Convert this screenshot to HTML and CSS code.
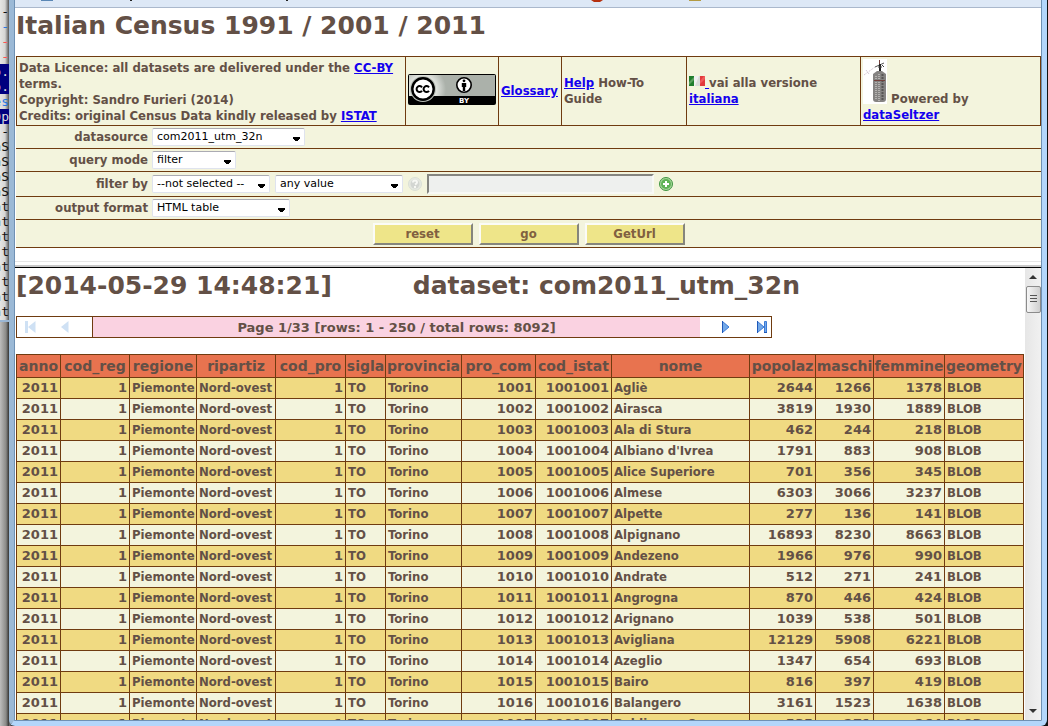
FILE: index.html
```html
<!DOCTYPE html>
<html lang="en">
<head>
<meta charset="utf-8">
<title>Italian Census 1991 / 2001 / 2011</title>
<link rel="stylesheet" href="styles.css">
</head>
<body>
<aside class="desk">
<pre class="terminal"><span>-</span><span class="t-blue">-</span><span class="t-red">-</span><span class="t-red">-</span><span class="t-sel">p.</span><span class="t-sel">p.</span><span class="t-blue">es</span><span class="t-sel">Op</span><span>--</span><span>aS</span><span>aS</span><span>aS</span><span>aS</span><span>at</span><span>at</span><span>at</span><span>.t</span><span>nt</span><span>.t</span><span>nt</span><span>nt</span></pre>
</aside>
<div class="window">
<div class="toolbar">
<svg width="700" height="7" aria-hidden="true"><path d="M26 0h12v1h-12z" fill="#5a87b5"/><path d="M115 0h2v1h-2zM271 0h2v1h-2z" fill="#222"/><path d="M576 0h12l-3 2h-6z" fill="#b5300f"/><path d="M674 0h12v1h-12z" fill="#b39a42"/></svg>
</div>
<section class="query">
<h1>Italian Census 1991 / 2001 / 2011</h1>
<table class="credits">
<colgroup><col class="k-lic"><col class="k-cc"><col class="k-glo"><col class="k-help"><col class="k-it"><col class="k-pow"></colgroup>
<tr>
<td>Data Licence: all datasets are delivered under the <a href="#">CC-BY</a> terms.<br>Copyright: Sandro Furieri (2014)<br>Credits: original Census Data kindly released by <a href="#">ISTAT</a></td>
<td class="cc-cell"><svg class="cc" width="88" height="31" viewBox="0 0 88 31" role="img" aria-label="Creative Commons BY"><defs><radialGradient id="halo" gradientUnits="userSpaceOnUse" cx="15" cy="15" r="23"><stop offset=".55" stop-color="#e4e7e2"/><stop offset="1" stop-color="#abb1aa"/></radialGradient></defs><rect width="88" height="31" rx="2" fill="#000"/><path d="M1 1h86v21H1z" fill="url(#halo)"/><circle cx="15" cy="15" r="13" fill="#b8bdb6"/><circle cx="15" cy="15" r="10.7" fill="#fff" stroke="#000" stroke-width="2.4"/><path d="M14 13.300a3 3 0 1 0 0 3.600M21 13.300a3 3 0 1 0 0 3.600" fill="none" stroke="#000" stroke-width="2"/><circle cx="56" cy="11" r="7.200" fill="#fff" stroke="#000" stroke-width="1.600"/><circle cx="56" cy="6.800" r="1.400"/><path d="M53.800 9h4.400v4h-1v4h-2.400v-4h-1z"/><text x="51" y="29" class="cc-by">BY</text></svg></td>
<td><a href="#">Glossary</a></td>
<td><a href="#">Help</a> How-To Guide</td>
<td><a href="#"><svg class="flag" width="16" height="11" viewBox="0 0 16 11" aria-hidden="true"><path d="M0 0h5v10H0z" fill="#1f7d2c"/><path d="M0 6 5 1v3L0 9z" fill="#5a9f5e"/><path d="M5 0h6v10H5z" fill="#f0f0f0"/><path d="M6 10 10 0h1v10z" fill="#d8dbd8"/><path d="M11 0h5v10h-5z" fill="#e23a3a"/><path d="m11 5 4-5h1v3l-5 5z" fill="#f05a5a"/></svg> </a>vai alla versione <a href="#">italiana</a></td>
<td><svg class="seltzer" width="24" height="45" viewBox="0 0 24 45" aria-hidden="true"><path d="M0 0h24v45H0z" fill="#fff"/><path d="M1 16 12 8M3 11l3 4" stroke="#d6cad6" stroke-dasharray="2 1"/><path d="M12 8l9-4" stroke="#555"/><path d="M16.500 1v4" stroke="#74413c"/><path d="M17 5v7" stroke="#222" stroke-width="2"/><path d="M15 8h4M19 6l2 2" stroke="#444"/><path d="M14 12h5l4 3v25q0 3-3 3h-7q-3 0-3-3V15z" fill="#858382"/><path d="M13 17v24M16 15v27" stroke="#b4b2b0" stroke-width="2" stroke-dasharray="1 1"/><path d="M19.500 15v27" stroke="#575554" stroke-width="2" stroke-dasharray="2 1"/><path d="M11 21.500h11" stroke="#74413c"/></svg> Powered by <a href="#">dataSeltzer</a></td>
</tr>
</table>
<form class="form">
<div class="row"><label for="ds">datasource</label><div class="fields"><select id="ds" class="w-ds"><option>com2011_utm_32n</option></select></div></div>
<div class="row"><label for="qm">query mode</label><div class="fields"><select id="qm" class="w-qm"><option>filter</option></select></div></div>
<div class="row row-filter"><label for="fb">filter by</label><div class="fields"><select id="fb" class="w-fb"><option>--not selected --</option></select><select class="w-av" aria-label="comparison"><option>any value</option></select>
<button type="button" class="icon" aria-label="help"><svg width="14" height="14" viewBox="0 0 14 14"><circle cx="7" cy="7" r="6.500" fill="#e6e9e1" stroke="#dadfd6"/><circle cx="7" cy="7" r="4.500" fill="#d3d6d2"/><path d="M5 5.500q0-2 2-2t2 2q0 1-2 2M7 9v2" fill="none" stroke="#f7f8f4" stroke-width="2"/></svg></button>
<input type="text" aria-label="value" disabled>
<button type="button" class="icon" aria-label="add"><svg width="14" height="14" viewBox="0 0 14 14"><circle cx="7" cy="7" r="6.500" fill="#a9d69c" stroke="#3f9440"/><circle cx="7" cy="7" r="5" fill="#5fb356"/><path d="M7 4v6M4 7h6" stroke="#fff" stroke-width="2"/></svg></button></div></div>
<div class="row"><label for="of">output format</label><div class="fields"><select id="of" class="w-of"><option>HTML table</option></select></div></div>
<div class="actions"><button type="reset">reset</button><button type="button">go</button><button type="button">GetUrl</button></div>
</form>
</section>
<section class="result">
<div class="content">
<h1 class="stamp"><span>[2014-05-29 14:48:21]</span><span>dataset: com2011_utm_32n</span></h1>
<nav class="pager">
<div class="nav-box"><button type="button" class="icon" aria-label="first page"><svg width="11" height="12" viewBox="0 0 11 12"><path d="M0 0h3v12H0zM10.500 0v12L3 6z" fill="#cfe1f4"/></svg></button><button type="button" class="icon" aria-label="previous page"><svg width="8" height="12" viewBox="0 0 8 12"><path d="M7.500 0v12L0 6z" fill="#cfe1f4"/></svg></button></div>
<div class="page">Page 1/33 [rows: 1 - 250 / total rows: 8092]</div>
<div class="nav-box nav-next"><button type="button" class="icon" aria-label="next page"><svg width="8" height="12" viewBox="0 0 8 12"><path d="M.5.500v11L7 6z" fill="#73a9e8" stroke="#3b7ad6"/><path d="M.5 0v12" stroke="#1f58b8"/></svg></button><button type="button" class="icon" aria-label="last page"><svg width="11" height="12" viewBox="0 0 11 12"><path d="M.5.500v11L7 6zM7.500.500h2v11h-2z" fill="#73a9e8" stroke="#3b7ad6"/><path d="M.5 0v12M7 11.500h3" stroke="#1f58b8"/></svg></button></div>
</nav>
<table class="data">
<colgroup><col class="c44"><col class="c69"><col class="c67"><col class="c79"><col class="c70"><col class="c40"><col class="c76"><col class="c74"><col class="c76"><col><col class="c66"><col class="c58"><col class="c71"><col class="c79"></colgroup>
<thead><tr><th>anno</th><th>cod_reg</th><th>regione</th><th>ripartiz</th><th>cod_pro</th><th>sigla</th><th>provincia</th><th>pro_com</th><th>cod_istat</th><th>nome</th><th>popolaz</th><th>maschi</th><th>femmine</th><th>geometry</th></tr></thead>
<tbody id="rows"></tbody>
</table>
</div>
<div class="scroll" aria-hidden="true"><i class="up"></i><i class="thumb"></i><i class="down"></i></div>
</section>
</div>
<script src="rows.js"></script>
</body>
</html>
```

FILE: styles.css
```css
* { box-sizing: border-box; }
body {
  margin: 0;
  height: 100vh;
  overflow: hidden;
  display: grid;
  grid-template-columns: 9px 1fr;
  background: linear-gradient(90deg, #bebebe, #666 10px, #111 14px, #111);
  color: #635046;
  font: bold 13px/16px "DejaVu Sans Condensed", "DejaVu Sans", sans-serif;
}
a { color: #1400ee; }
h1 {
  margin: 0;
  font: bold 25px/32px "DejaVu Sans", sans-serif;
}
.desk { overflow: hidden; background: linear-gradient(90deg, #bdbdbd, #8a8a88 6px, #333); }
.terminal {
  margin: 0;
  padding-top: 4px;
  height: 322px;
  display: flex;
  flex-direction: column;
  align-items: flex-end;
  background: linear-gradient(90deg, #e6e6e4, #d5d5d3 5px, #555);
  border-bottom: 2px solid #9ab6d4;
  color: #111;
  font: 13px/15px "DejaVu Sans Mono", monospace;
}
.t-blue { color: #2a78e4; }
.t-red { color: #ff5050; }
.t-sel { background: #00007f; color: #ddd; }

.window {
  min-width: 0;
  display: flex;
  flex-direction: column;
  overflow: hidden;
  border: solid #b3d6fb;
  border-width: 0 5px 5px 5px;
  border-left-color: #9bb9d6;
  border-radius: 0 0 6px 6px;
  margin-right: 1px;
  background: #fff;
  box-shadow: inset 1px 0 #6f91b4, inset -1px -1px #6f91b4;
  padding: 0 1px 1px 1px;
}
.toolbar { height: 8px; background: #dde8f6; border-bottom: 1px solid #aab8cc; overflow: hidden; flex: none; }
.toolbar svg { display: block; }

.query { height: 260px; flex: none; border-bottom: 1px solid #000; box-shadow: inset 0 -2px #c8c8c8, inset 0 -5px #fff, inset 0 -6px #e6e6e6; }
.query h1 { padding: 2px 0 14px 1px; }
.credits, .data { width: 100%; table-layout: fixed; border-collapse: collapse; }
.credits { width: calc(100% - 1px); margin-left: 1px; }
.credits td { border: 1px solid #6f3b10; padding: 2px; background: #f3f4dd; }
.credits td:first-child { padding: 2px 2px 1px; }
.credits .cc-cell { padding-bottom: 6px; }
.k-lic { width: 389px; }
.k-cc { width: 93px; }
.k-glo { width: 63px; }
.k-help { width: 125px; }
.k-it { width: 174px; }
.cc { display: block; }
.cc-by { font: bold 7px "DejaVu Sans", sans-serif; fill: #fff; }
.seltzer { vertical-align: baseline; margin-bottom: -1px; }

.form { background: #f3f4dd; margin-left: 1px; }
.row {
  display: grid;
  grid-template-columns: 132px 1fr;
  gap: 4px;
  align-items: center;
  height: 23px;
  border-bottom: 1px solid #6f3b10;
}
.row-filter { height: 25px; }
.row label { text-align: right; }
.fields { display: flex; align-items: center; gap: 5px; }
select {
  appearance: none;
  height: 18px;
  padding: 0 4px;
  border: 1px solid #dfe3ee;
  border-top-color: #ababb3;
  border-radius: 2px;
  background: linear-gradient(#000, #000) right 4px top 8px / 7px 1px no-repeat,
    linear-gradient(#000, #000) right 4px top 9px / 7px 1px no-repeat,
    linear-gradient(#000, #000) right 5px top 10px / 5px 1px no-repeat,
    linear-gradient(#000, #000) right 6px top 11px / 3px 1px no-repeat, #fff;
  color: #000;
  font: 11px/16px "DejaVu Sans", sans-serif;
}
.w-ds { width: 153px; }
.w-qm { width: 84px; }
.w-fb { width: 118px; }
.w-av { width: 128px; }
.w-of { width: 138px; }
.icon { padding: 0; border: 0; background: none; display: flex; }
input { width: 227px; height: 20px; border: 2px solid #f8f9f6; border-top-color: #858580; border-left-color: #858580; background: #eef0ee; }
.actions { display: flex; justify-content: center; gap: 6px; padding: 3px 0 2px; border-bottom: 1px solid #6f3b10; }
.actions button {
  width: 100px;
  height: 22px;
  padding: 0;
  border: 2px solid #85857c;
  border-top-color: #fbfbf6;
  border-left-color: #fbfbf6;
  background: #eee589;
  color: #806040;
  font: bold 13px/16px "DejaVu Sans Condensed", sans-serif;
}

.result { flex: 1; min-height: 0; display: flex; }
.content { flex: 1; min-width: 0; overflow: hidden; padding: 2px 1px 0 1px; }
.stamp { display: flex; gap: 81px; }
.pager { display: flex; width: 756px; height: 22px; margin: 14px 0 16px; border: 1px solid #6f3b10; background: #fff; }
.nav-box { display: flex; align-items: center; gap: 25px; width: 76px; padding-left: 8px; border-right: 1px solid #6f3b10; }
.nav-next { width: 71px; padding-left: 22px; gap: 27px; border: 0; }
.page { flex: 1; background: #fad2e1; text-align: center; line-height: 21px; font-family: "DejaVu Sans", sans-serif; }
.data th, .data td { border: 1px solid #6f3b10; padding: 0 2px; white-space: nowrap; }
.data th { height: 23px; padding: 0; background: #e8734f; font-family: "DejaVu Sans", sans-serif; font-size: 14px; }
.data td { height: 21px; background: #f3f4dd; text-align: left; }
.data tr:nth-child(odd) td { background: #f0da82; }
.data td.num { text-align: right; font-family: "DejaVu Sans", sans-serif; }
.c40 { width: 40px; }
.c44 { width: 44px; }
.c58 { width: 58px; }
.c66 { width: 66px; }
.c67 { width: 67px; }
.c69 { width: 69px; }
.c70 { width: 70px; }
.c71 { width: 71px; }
.c74 { width: 74px; }
.c76 { width: 76px; }
.c79 { width: 79px; }

.scroll { width: 16px; display: flex; flex-direction: column; align-items: center; background: linear-gradient(90deg, #e6e6e6, #f1f1f1); }
.up, .down { border: 4px solid transparent; border-top: 0; border-bottom: 4px solid #333; margin: 7px 0; }
.down { border-bottom: 0; border-top: 4px solid #333; margin: auto 0 7px; }
.thumb {
  width: 15px;
  height: 27px;
  border: 1px solid #8b8b8b;
  border-radius: 2px;
  background: repeating-linear-gradient(#555 0 1px, transparent 1px 3px) center / 7px 9px no-repeat, linear-gradient(90deg, #f6f6f6, #cfcfcf);
}
```

FILE: rows.js
```js
const towns = [
  ["Agliè", 2644, 1266, 1378], ["Airasca", 3819, 1930, 1889], ["Ala di Stura", 462, 244, 218],
  ["Albiano d'Ivrea", 1791, 883, 908], ["Alice Superiore", 701, 356, 345], ["Almese", 6303, 3066, 3237],
  ["Alpette", 277, 136, 141], ["Alpignano", 16893, 8230, 8663], ["Andezeno", 1966, 976, 990],
  ["Andrate", 512, 271, 241], ["Angrogna", 870, 446, 424], ["Arignano", 1039, 538, 501],
  ["Avigliana", 12129, 5908, 6221], ["Azeglio", 1347, 654, 693], ["Bairo", 816, 397, 419],
  ["Balangero", 3161, 1523, 1638], ["Baldissero Canavese", 535, 271, 264]
];
const body = document.getElementById("rows");
towns.forEach(([name, total, male, female], i) => {
  const tr = body.insertRow();
  const cells = [2011, 1, "Piemonte", "Nord-ovest", 1, "TO", "Torino", 1001 + i, 1001001 + i, name, total, male, female, "BLOB"];
  for (const value of cells) {
    const td = tr.insertCell();
    td.textContent = value;
    if (typeof value === "number") td.className = "num";
  }
});
```
